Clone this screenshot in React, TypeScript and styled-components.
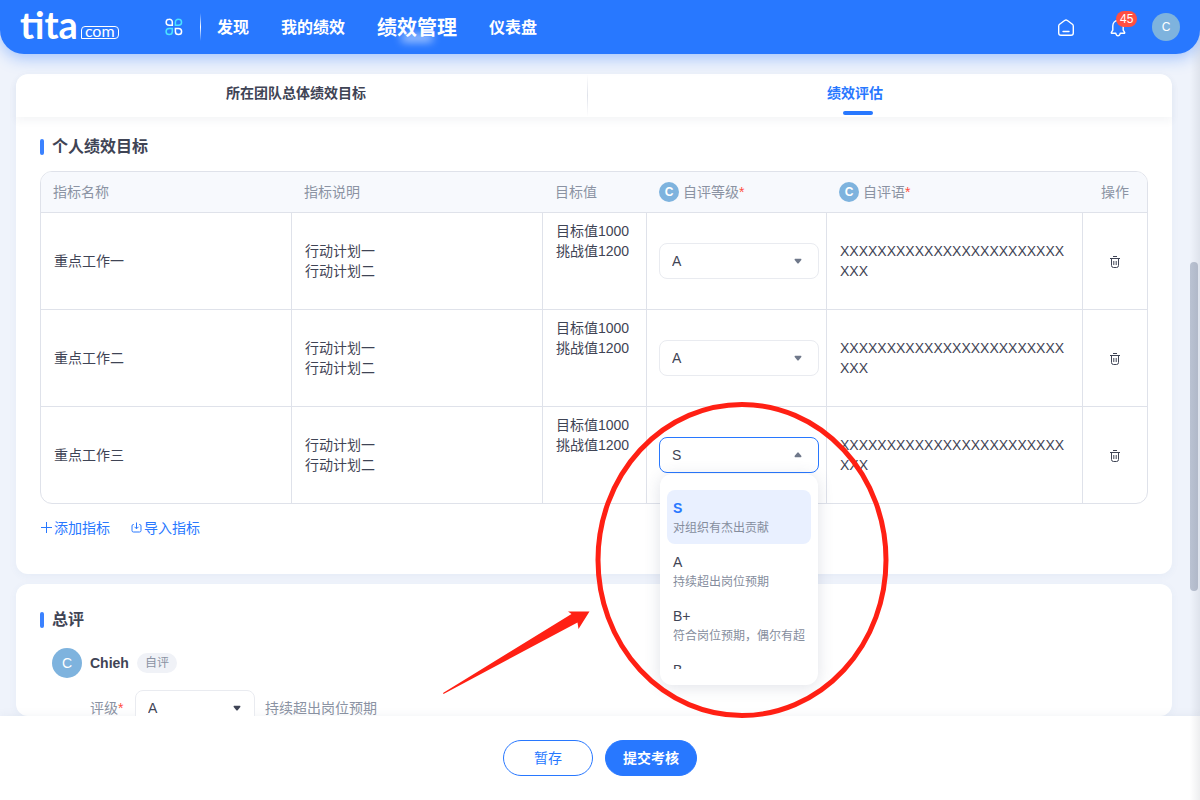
import React from "react";
import styled, { createGlobalStyle, css } from "styled-components";

const GlobalStyle = createGlobalStyle`
  *, *::before, *::after { box-sizing: border-box; }
  body {
    margin: 0;
    background: #eff3fb;
    color: #3f4455;
    font-family: "Liberation Sans", "Noto Sans CJK SC", sans-serif;
    font-size: 14px;
    line-height: 20px;
  }
  button, select { font: inherit; color: inherit; }
  h2, ul, p { margin: 0; padding: 0; }
`;

const Page = styled.div`
  position: relative;
  display: flex;
  flex-direction: column;
  height: 100vh;
  overflow: hidden;
`;

const TopBar = styled.header`
  position: relative;
  z-index: 1;
  flex: none;
  display: flex;
  align-items: center;
  height: 54px;
  padding: 0 20px;
  border-radius: 0 0 24px 24px;
  background: #2878ff;
  box-shadow: 0 4px 16px rgba(40, 120, 255, 0.4);
  color: #fff;
`;

const Logo = styled.a`
  display: flex;
  align-items: flex-start;
  gap: 3px;
  width: 98px;
  height: 38px;
  color: #fff;
  text-decoration: none;
`;

const LogoName = styled.span`
  font: 700 38px/32px Lato, sans-serif;
`;

const LogoSuffix = styled.span`
  margin-top: 18px;
  padding: 0 3px 3px;
  border: 1px solid #fff;
  border-radius: 4px 4px 4px 0;
  font: 400 16px/8px Lato, sans-serif;
`;

const IconButton = styled.button`
  position: relative;
  display: inline-flex;
  align-items: center;
  justify-content: center;
  padding: 0;
  border: 0;
  background: none;
  vertical-align: middle;
  cursor: pointer;
`;

const AppsButton = styled(IconButton)`
  margin-left: 47px;
`;

const BarDivider = styled.span`
  width: 1px;
  height: 28px;
  margin: 0 16px 0 17px;
  background: linear-gradient(transparent, #fff, transparent);
`;

const Nav = styled.nav`
  display: flex;
  align-items: center;
  gap: 32px;
  padding-top: 2px;
`;

const NavLink = styled.a<{ $active?: boolean }>`
  position: relative;
  color: #fff;
  font-size: ${(p) => (p.$active ? 20 : 16)}px;
  font-weight: 700;
  line-height: 28px;
  text-decoration: none;
  ${(p) =>
    p.$active &&
    css`
      &::after {
        content: "";
        position: absolute;
        left: 24px;
        bottom: 0;
        width: 32px;
        height: 8px;
        border-radius: 4px;
        background: rgba(255, 255, 255, 0.6);
        filter: blur(4px);
      }
    `}
`;

const Tools = styled.div`
  display: flex;
  align-items: center;
  gap: 24px;
  margin-left: auto;
  padding: 2px 20px 0 0;
`;

const ToolButton = styled(IconButton)`
  width: 28px;
  height: 28px;
`;

const Count = styled.span`
  position: absolute;
  top: -3px;
  left: 12px;
  padding: 0 4px;
  border-radius: 8px;
  background: #ff4f42;
  font-size: 12px;
  line-height: 16px;
`;

const Avatar = styled.span<{ $size: number; $font: number; $bold?: boolean }>`
  flex: none;
  display: inline-flex;
  align-items: center;
  justify-content: center;
  width: ${(p) => p.$size}px;
  height: ${(p) => p.$size}px;
  border-radius: 50%;
  background: #7eb3de;
  color: #fff;
  font-size: ${(p) => p.$font}px;
  font-weight: ${(p) => (p.$bold ? 700 : 400)};
`;

const Main = styled.main`
  flex: 1;
  min-height: 0;
  display: flex;
  flex-direction: column;
  gap: 10px;
  padding: 20px 28px 0 16px;
`;

const Card = styled.section<{ $clipped?: boolean }>`
  border-radius: 12px;
  background: #fff;
  box-shadow: 0 2px 8px rgba(60, 90, 150, 0.05);
  ${(p) => (p.$clipped ? "flex: 1; min-height: 0; overflow: hidden;" : "flex: none;")}
`;

const CardBody = styled.div<{ $top: number }>`
  padding: ${(p) => p.$top}px 24px 36px;
`;

const Tabs = styled.div`
  display: grid;
  grid-template-columns: minmax(0, 571fr) 1px minmax(0, 584fr);
  height: 43px;
  border-radius: 12px 12px 0 0;
  box-shadow: 0 4px 8px rgba(40, 60, 100, 0.05);
`;

const TabDivider = styled.span`
  background: linear-gradient(transparent, #dfe2ea, transparent);
`;

const Tab = styled.button<{ $active?: boolean }>`
  display: flex;
  justify-content: center;
  padding: 9px ${(p) => (p.$active ? 50 : 11)}px 0 0;
  border: 0;
  background: none;
  color: ${(p) => (p.$active ? "#2878ff" : "#3f4455")};
  font-weight: 700;
  cursor: pointer;
`;

const TabLabel = styled.span<{ $active?: boolean }>`
  position: relative;
  ${(p) =>
    p.$active &&
    css`
      &::after {
        content: "";
        position: absolute;
        left: 16px;
        top: 28px;
        width: 30px;
        height: 4px;
        border-radius: 2px;
        background: #2878ff;
      }
    `}
`;

const SectionTitle = styled.h2`
  display: flex;
  align-items: center;
  gap: 8px;
  margin-bottom: 12px;
  font-size: 16px;
  font-weight: 700;
  line-height: 24px;
  &::before {
    content: "";
    width: 4px;
    height: 16px;
    border-radius: 2px;
    background: #3b82ff;
  }
`;

const TableFrame = styled.div`
  border: 1px solid #dfe2ea;
  border-radius: 12px;
`;

const Table = styled.table`
  width: 100%;
  table-layout: fixed;
  border-collapse: separate;
  border-spacing: 0;
`;

const Col = styled.col<{ $width?: number }>`
  width: ${(p) => (p.$width ? `${p.$width}px` : "auto")};
`;

const HeadCell = styled.th<{ $center?: boolean }>`
  height: 41px;
  padding: 0 12px;
  border-bottom: 1px solid #dfe2ea;
  background: #f7f9fd;
  color: #8b93a3;
  font-weight: 400;
  text-align: ${(p) => (p.$center ? "center" : "left")};
  &:first-child { border-top-left-radius: 11px; }
  &:last-child { border-top-right-radius: 11px; }
`;

const HeadLabel = styled.span`
  display: flex;
  align-items: center;
  gap: 4px;
`;

const Required = styled.span`
  color: #ff4f42;
`;

const Row = styled.tr`
  height: 97px;
  &:last-child { height: 96px; }
`;

const Cell = styled.td<{ $top?: boolean; $field?: boolean; $center?: boolean }>`
  padding: 8px ${(p) => (p.$field ? "7px 8px 12px" : "13px")};
  border-right: 1px solid #dfe2ea;
  border-bottom: 1px solid #dfe2ea;
  vertical-align: ${(p) => (p.$top ? "top" : "middle")};
  text-align: ${(p) => (p.$center ? "center" : "left")};
  overflow-wrap: anywhere;
  &:last-child { border-right: 0; }
  ${Row}:last-child & { border-bottom: 0; }
`;

const SelectBox = styled.div<{ $width: number }>`
  position: relative;
  flex: none;
  width: ${(p) => p.$width}px;
  > svg {
    position: absolute;
    top: 15px;
    right: ${(p) => (p.$width > 120 ? 17 : 14)}px;
    pointer-events: none;
  }
`;

const Select = styled.select<{ $open?: boolean }>`
  display: block;
  appearance: none;
  width: 100%;
  height: 36px;
  padding: 0 12px;
  border: 1px solid ${(p) => (p.$open ? "#2878ff" : "#e9ebf0")};
  border-radius: 8px;
  outline: 0;
  background: #fff;
`;

const Menu = styled.div`
  position: absolute;
  z-index: 2;
  top: 37px;
  left: 1px;
  right: 1px;
  padding: 16px 7px;
  border-radius: 12px;
  background: #fff;
  box-shadow: 0 2px 16px rgba(60, 75, 110, 0.16);
`;

const OptionList = styled.ul`
  height: 179px;
  overflow: hidden;
  list-style: none;
`;

const Option = styled.li<{ $selected?: boolean }>`
  height: 54px;
  padding: 8px 6px 6px;
  border-radius: 8px;
  background: ${(p) => (p.$selected ? "#e9f0ff" : "transparent")};
  white-space: nowrap;
`;

const OptionName = styled.p<{ $selected?: boolean }>`
  color: ${(p) => (p.$selected ? "#2878ff" : "#3f4455")};
  font-weight: ${(p) => (p.$selected ? 700 : 400)};
`;

const OptionNote = styled.p`
  overflow: hidden;
  color: #858d9d;
  font-size: 12px;
`;

const Links = styled.div`
  display: flex;
  gap: 20px;
  margin-top: 14px;
`;

const TextButton = styled.button`
  display: inline-flex;
  align-items: center;
  gap: 2px;
  padding: 0;
  border: 0;
  background: none;
  color: #2878ff;
  cursor: pointer;
`;

const Reviewer = styled.div`
  display: flex;
  align-items: center;
  gap: 8px;
  padding: 4px 0 0 12px;
`;

const Tag = styled.span`
  padding: 0 8px;
  border-radius: 10px;
  background: #f0f2f7;
  color: #8b93a3;
  font-size: 12px;
`;

const RatingRow = styled.div`
  display: flex;
  align-items: center;
  gap: 10px;
  margin-top: 12px;
  padding-left: 50px;
  color: #8b93a3;
`;

const RatingLabel = styled.label`
  width: 35px;
`;

const RatingSelect = styled(Select)`
  color: #3f4455;
`;

const Footer = styled.footer`
  flex: none;
  display: flex;
  justify-content: center;
  gap: 12px;
  padding: 24px;
  background: #fff;
  box-shadow: 0 -2px 8px rgba(60, 75, 110, 0.05);
`;

const ActionButton = styled.button<{ $primary?: boolean }>`
  min-width: 90px;
  height: 36px;
  padding: 0 17px;
  border: 1px solid #2878ff;
  border-radius: 18px;
  background: ${(p) => (p.$primary ? "#2878ff" : "#fff")};
  color: ${(p) => (p.$primary ? "#fff" : "#2878ff")};
  font-weight: ${(p) => (p.$primary ? 700 : 400)};
  cursor: pointer;
`;

const ScrollThumb = styled.div`
  position: absolute;
  top: 262px;
  right: 2px;
  width: 8px;
  height: 329px;
  border-radius: 4px;
  background: #bac2d2;
`;

const EdgeShade = styled.div`
  position: absolute;
  z-index: 0;
  top: 0;
  right: 0;
  bottom: 0;
  width: 10px;
  background: linear-gradient(to right, transparent, rgba(30, 40, 60, 0.08));
  pointer-events: none;
`;

const Annotation = styled.svg`
  position: absolute;
  z-index: 3;
  top: 400px;
  left: calc(50% - 160px);
  pointer-events: none;
`;

const AppsIcon = () => (
  <svg width="18" height="18" viewBox="0 0 18 18" fill="none" strokeWidth="1.5">
    <path d="M4.2 1.2A3 3 0 0 1 7.3 4.3V7.3H4.2A3 3 0 0 1 4.2 1.2Z" stroke="#fff" />
    <path d="M13.5 1.2A3 3 0 0 1 13.5 7.3H10.4V4.3A3 3 0 0 1 13.5 1.2Z" stroke="#4be3ff" />
    <path d="M4.2 10.4H7.3V13.5A3.1 3.1 0 1 1 4.2 10.4Z" stroke="#4be3ff" />
    <path d="M10.4 10.4H13.5A3.1 3.1 0 1 1 10.4 13.5Z" stroke="#fff" />
  </svg>
);

const HomeIcon = () => (
  <svg width="18" height="18" viewBox="0 0 18 18" fill="none" stroke="#fff" strokeWidth="1.4" strokeLinecap="round" strokeLinejoin="round">
    <path d="M1.700 7.200Q1.700 6 2.600 5.300L7.600 1.500Q9 .600 10.400 1.500L15.400 5.300Q16.300 6 16.300 7.200V14Q16.300 16.300 14 16.300H4Q1.700 16.300 1.700 14Z" />
    <path d="M6 12.500H12" />
  </svg>
);

const BellIcon = () => (
  <svg width="18" height="18" viewBox="0 0 18 18" fill="none" stroke="#fff" strokeWidth="1.4" strokeLinecap="round" strokeLinejoin="round">
    <path d="M9 1.500C5.600 1.500 3.800 4 3.800 7V11.200L2.400 13.400Q2 14.300 3 14.300H6.800Q7.300 16.800 9 16.800T11.200 14.300H15Q16 14.300 15.600 13.400L14.200 11.200V7C14.200 4 12.400 1.500 9 1.500Z" />
  </svg>
);

const TrashIcon = () => (
  <svg width="12" height="14" viewBox="0 0 12 14" fill="none" stroke="#3f4455">
    <path d="M1 3.500H11M4 1.500H8M2.500 3.500V10.500Q2.500 12.500 4.500 12.500H7.500Q9.500 12.500 9.500 10.500V3.500M4.800 6V10M7.200 6V10" />
  </svg>
);

const Caret = ({ up, color = "#6f788a" }: { up?: boolean; color?: string }) => (
  <svg width="8" height="6" viewBox="0 0 9 6" fill={color}>
    {up ? (
      <path d="M4.500 0Q5 0 5.300 .400L8.200 3.800Q8.800 5.500 7.600 5.500H1.400Q.2 5.500 .8 3.800L3.700 .400Q4 0 4.500 0Z" />
    ) : (
      <path d="M1.400 .500H7.600Q8.800 .500 8.200 2L5.300 5.500Q4.500 6.200 3.700 5.500L.8 2Q.2 .500 1.400 .500Z" />
    )}
  </svg>
);

const PlusIcon = () => (
  <svg width="12" height="12" viewBox="0 0 12 12" stroke="#2878ff">
    <path d="M6.500 0V11M1 5.500H12" />
  </svg>
);

const ImportIcon = () => (
  <svg width="12" height="12" viewBox="0 0 12 12" fill="none" stroke="#2878ff">
    <path d="M4 2.500H3.500Q2 2.500 2 4V8.500Q2 10 3.500 10H9.500Q11 10 11 8.500V4Q11 2.500 9.500 2.500H9M6.500 .5V6.500M4.500 4.800L6.500 6.800L8.500 4.800" />
  </svg>
);

const grades = [
  { name: "S", note: "对组织有杰出贡献" },
  { name: "A", note: "持续超出岗位预期" },
  { name: "B+", note: "符合岗位预期，偶尔有超" },
  { name: "B", note: "" },
];

const goals = [
  { name: "重点工作一", grade: "A", open: false },
  { name: "重点工作二", grade: "A", open: false },
  { name: "重点工作三", grade: "S", open: true },
];

const GradeOptions = () => (
  <>
    {grades.map((g) => (
      <option key={g.name}>{g.name}</option>
    ))}
  </>
);

const GradeField = ({ label, grade, open }: { label: string; grade: string; open: boolean }) => (
  <SelectBox $width={160}>
    <Select aria-label={label} defaultValue={grade} $open={open}>
      <GradeOptions />
    </Select>
    <Caret up={open} />
    {open && (
      <Menu>
        <OptionList role="listbox" aria-label={label}>
          {grades.map((g) => (
            <Option key={g.name} role="option" aria-selected={g.name === grade} $selected={g.name === grade}>
              <OptionName $selected={g.name === grade}>{g.name}</OptionName>
              <OptionNote>{g.note}</OptionNote>
            </Option>
          ))}
        </OptionList>
      </Menu>
    )}
  </SelectBox>
);

export default function App() {
  return (
    <Page>
      <GlobalStyle />
      <TopBar>
        <Logo href="#">
          <LogoName>tita</LogoName>
          <LogoSuffix>com</LogoSuffix>
        </Logo>
        <AppsButton aria-label="应用">
          <AppsIcon />
        </AppsButton>
        <BarDivider />
        <Nav>
          <NavLink href="#">发现</NavLink>
          <NavLink href="#">我的绩效</NavLink>
          <NavLink href="#" $active>绩效管理</NavLink>
          <NavLink href="#">仪表盘</NavLink>
        </Nav>
        <Tools>
          <ToolButton aria-label="首页">
            <HomeIcon />
          </ToolButton>
          <ToolButton aria-label="通知">
            <BellIcon />
            <Count>45</Count>
          </ToolButton>
        </Tools>
        <Avatar $size={28} $font={12}>C</Avatar>
      </TopBar>

      <Main>
        <Card>
          <Tabs role="tablist">
            <Tab role="tab" aria-selected={false}>
              <TabLabel>所在团队总体绩效目标</TabLabel>
            </Tab>
            <TabDivider />
            <Tab role="tab" aria-selected $active>
              <TabLabel $active>绩效评估</TabLabel>
            </Tab>
          </Tabs>
          <CardBody $top={18}>
            <SectionTitle>个人绩效目标</SectionTitle>
            <TableFrame>
              <Table>
                <colgroup>
                  <Col />
                  <Col />
                  <Col $width={104} />
                  <Col $width={180} />
                  <Col $width={256} />
                  <Col $width={64} />
                </colgroup>
                <thead>
                  <tr>
                    <HeadCell>指标名称</HeadCell>
                    <HeadCell>指标说明</HeadCell>
                    <HeadCell>目标值</HeadCell>
                    <HeadCell>
                      <HeadLabel>
                        <Avatar $size={20} $font={12} $bold>C</Avatar>
                        <span>自评等级<Required>*</Required></span>
                      </HeadLabel>
                    </HeadCell>
                    <HeadCell>
                      <HeadLabel>
                        <Avatar $size={20} $font={12} $bold>C</Avatar>
                        <span>自评语<Required>*</Required></span>
                      </HeadLabel>
                    </HeadCell>
                    <HeadCell $center>操作</HeadCell>
                  </tr>
                </thead>
                <tbody>
                  {goals.map((goal) => (
                    <Row key={goal.name}>
                      <Cell>{goal.name}</Cell>
                      <Cell>
                        行动计划一
                        <br />
                        行动计划二
                      </Cell>
                      <Cell $top>
                        目标值1000
                        <br />
                        挑战值1200
                      </Cell>
                      <Cell $field>
                        <GradeField label={`${goal.name} 自评等级`} grade={goal.grade} open={goal.open} />
                      </Cell>
                      <Cell>XXXXXXXXXXXXXXXXXXXXXXXXXXX</Cell>
                      <Cell $center>
                        <IconButton aria-label="删除">
                          <TrashIcon />
                        </IconButton>
                      </Cell>
                    </Row>
                  ))}
                </tbody>
              </Table>
            </TableFrame>
            <Links>
              <TextButton>
                <PlusIcon />
                添加指标
              </TextButton>
              <TextButton>
                <ImportIcon />
                导入指标
              </TextButton>
            </Links>
          </CardBody>
        </Card>

        <Card $clipped>
          <CardBody $top={24}>
            <SectionTitle>总评</SectionTitle>
            <Reviewer>
              <Avatar $size={30} $font={14}>C</Avatar>
              <strong>Chieh</strong>
              <Tag>自评</Tag>
            </Reviewer>
            <RatingRow>
              <RatingLabel htmlFor="overall">
                评级<Required>*</Required>
              </RatingLabel>
              <SelectBox $width={120}>
                <RatingSelect id="overall" defaultValue="A">
                  <GradeOptions />
                </RatingSelect>
                <Caret color="#3f4455" />
              </SelectBox>
              <span>持续超出岗位预期</span>
            </RatingRow>
          </CardBody>
        </Card>
      </Main>

      <Footer>
        <ActionButton>暂存</ActionButton>
        <ActionButton $primary>提交考核</ActionButton>
      </Footer>

      <ScrollThumb />
      <EdgeShade />
      <Annotation width="452" height="320" viewBox="0 0 452 320" aria-hidden="true">
        <ellipse cx="302" cy="160" rx="144" ry="155.5" fill="none" stroke="#ff2014" strokeWidth="5" />
        <path d="M3 293L131.500 214L128 211.500L149.500 211.500L138.500 229L137.500 222.500L3.500 294Z" fill="#ff2014" />
      </Annotation>
    </Page>
  );
}
